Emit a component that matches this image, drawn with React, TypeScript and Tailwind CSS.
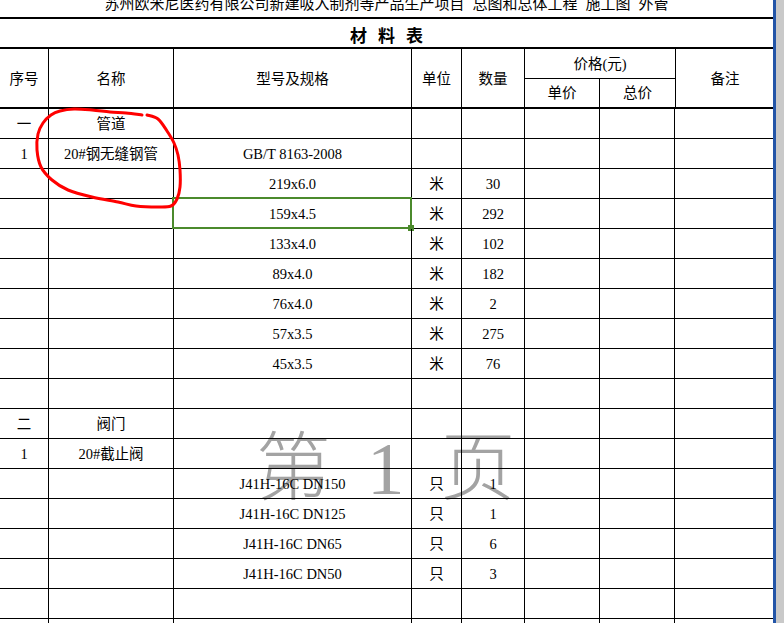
import React from "react";

type Row = [string, string, string, string, string];

const rows: Row[] = [
  ["一", "管道", "", "", ""],
  ["1", "20#钢无缝钢管", "GB/T 8163-2008", "", ""],
  ["", "", "219x6.0", "米", "30"],
  ["", "", "159x4.5", "米", "292"],
  ["", "", "133x4.0", "米", "102"],
  ["", "", "89x4.0", "米", "182"],
  ["", "", "76x4.0", "米", "2"],
  ["", "", "57x3.5", "米", "275"],
  ["", "", "45x3.5", "米", "76"],
  ["", "", "", "", ""],
  ["二", "阀门", "", "", ""],
  ["1", "20#截止阀", "", "", ""],
  ["", "", "J41H-16C DN150", "只", "1"],
  ["", "", "J41H-16C DN125", "只", "1"],
  ["", "", "J41H-16C DN65", "只", "6"],
  ["", "", "J41H-16C DN50", "只", "3"],
  ["", "", "", "", ""],
  ["", "", "", "", ""],
];

const widths = ["w-[49px]", "w-[125px]", "w-[238px]", "w-[50px]", "w-[63px]", "w-[75px]", "w-[75px]", "w-[98px]"];

// freehand red mark drawn around the pipe name
const mark: [number, number][] = [
  [147, 115], [158, 119], [167, 131], [174, 143], [178, 155], [180, 170], [180, 187],
  [177, 199], [171, 206], [158, 207], [136, 206], [118, 202], [92, 197], [68, 190],
  [52, 180], [41, 167], [37, 150], [38, 134], [43, 123], [51, 115], [60, 111],
  [74, 109], [92, 110], [110, 112], [126, 113], [142, 115],
];

function smooth(pts: [number, number][]) {
  let d = `M${pts[0][0]},${pts[0][1]}`;
  for (let i = 0; i < pts.length - 1; i++) {
    const p0 = pts[i - 1] || pts[i];
    const p1 = pts[i];
    const p2 = pts[i + 1];
    const p3 = pts[i + 2] || p2;
    const c1x = p1[0] + (p2[0] - p0[0]) / 6;
    const c1y = p1[1] + (p2[1] - p0[1]) / 6;
    const c2x = p2[0] - (p3[0] - p1[0]) / 6;
    const c2y = p2[1] - (p3[1] - p1[1]) / 6;
    d += ` C${c1x},${c1y} ${c2x},${c2y} ${p2[0]},${p2[1]}`;
  }
  return d;
}

export default function App() {
  return (
    <div className="relative flex h-[623px] w-[784px] overflow-hidden bg-white text-black font-['Liberation_Serif','Noto_Sans_CJK_SC',serif]">
      {/* page watermark sits under the grid */}
      <div className="pointer-events-none absolute left-[256px] top-[424px] z-0 flex items-baseline gap-[36px] text-[75px] leading-[75px] text-[#a3a3a3]">
        <span className="font-light font-['Noto_Sans_CJK_SC',sans-serif]">第</span>
        <span className="font-['Liberation_Serif',serif]">1</span>
        <span className="font-light font-['Noto_Sans_CJK_SC',sans-serif]">页</span>
      </div>

      <div className="relative z-10 w-[773px] shrink-0">
        <div className="h-[19px] overflow-hidden border-b-2 border-black">
          <div className="-mt-[5px] flex justify-center gap-[8px] text-[15px] leading-[15px] whitespace-pre font-['Noto_Sans_CJK_SC',sans-serif]">
            <span>苏州欧米尼医药有限公司新建吸入制剂等产品生产项目</span>
            <span>总图和总体工程</span>
            <span>施工图</span>
            <span>外管</span>
          </div>
        </div>

        <div className="flex h-[30px] items-center justify-center gap-[11px] border-b-2 border-black pt-[4px] text-[17px] font-bold font-['Noto_Sans_CJK_SC',sans-serif]">
          <span>材</span>
          <span>料</span>
          <span>表</span>
        </div>

        <div className="flex h-[60px] border-b-2 border-black text-[14.5px]">
          {["序号", "名称", "型号及规格", "单位", "数量"].map((t, i) => (
            <div key={t} className={`${widths[i]} flex shrink-0 items-center justify-center border-r border-black pt-[4px]`}>
              {t}
            </div>
          ))}
          <div className="flex w-[151px] shrink-0 flex-col border-r border-black">
            <div className="flex h-[30px] items-center justify-center border-b border-black pt-[2px]">价格(元)</div>
            <div className="flex flex-1">
              <div className="flex w-[75px] items-center justify-center border-r border-black pt-[2px]">单价</div>
              <div className="flex flex-1 items-center justify-center pt-[2px]">总价</div>
            </div>
          </div>
          <div className={`${widths[7]} flex shrink-0 items-center justify-center pt-[4px]`}>备注</div>
        </div>

        {rows.map((r, ri) => (
          <div key={ri} className="flex h-[30px] border-b border-black text-[14.5px]">
            {widths.map((w, ci) => (
              <div
                key={ci}
                className={`${w} relative flex shrink-0 items-center justify-center pt-[2px] ${ci < 7 ? "border-r border-black" : ""}`}
              >
                {ci < 5 ? r[ci] : ""}
                {ri === 3 && ci === 2 && (
                  <>
                    <div className="absolute -left-[2px] -top-[2px] h-[32px] w-[240px] border-[2px] border-[#4b8a2c]" />
                    <div className="absolute left-[234px] top-[26px] h-[6px] w-[6px] bg-[#4b8a2c]" />
                  </>
                )}
              </div>
            ))}
          </div>
        ))}
      </div>
      <div className="relative z-10 w-[3px] shrink-0 bg-[#2355a8]" />
      <div className="relative z-10 flex-1 bg-[#c9c9c9]" />

      <svg className="pointer-events-none absolute left-0 top-0 z-20" width="784" height="623">
        <path d={smooth(mark)} fill="none" stroke="#ff0000" strokeWidth="3" strokeLinecap="round" strokeLinejoin="round" />
      </svg>
    </div>
  );
}
